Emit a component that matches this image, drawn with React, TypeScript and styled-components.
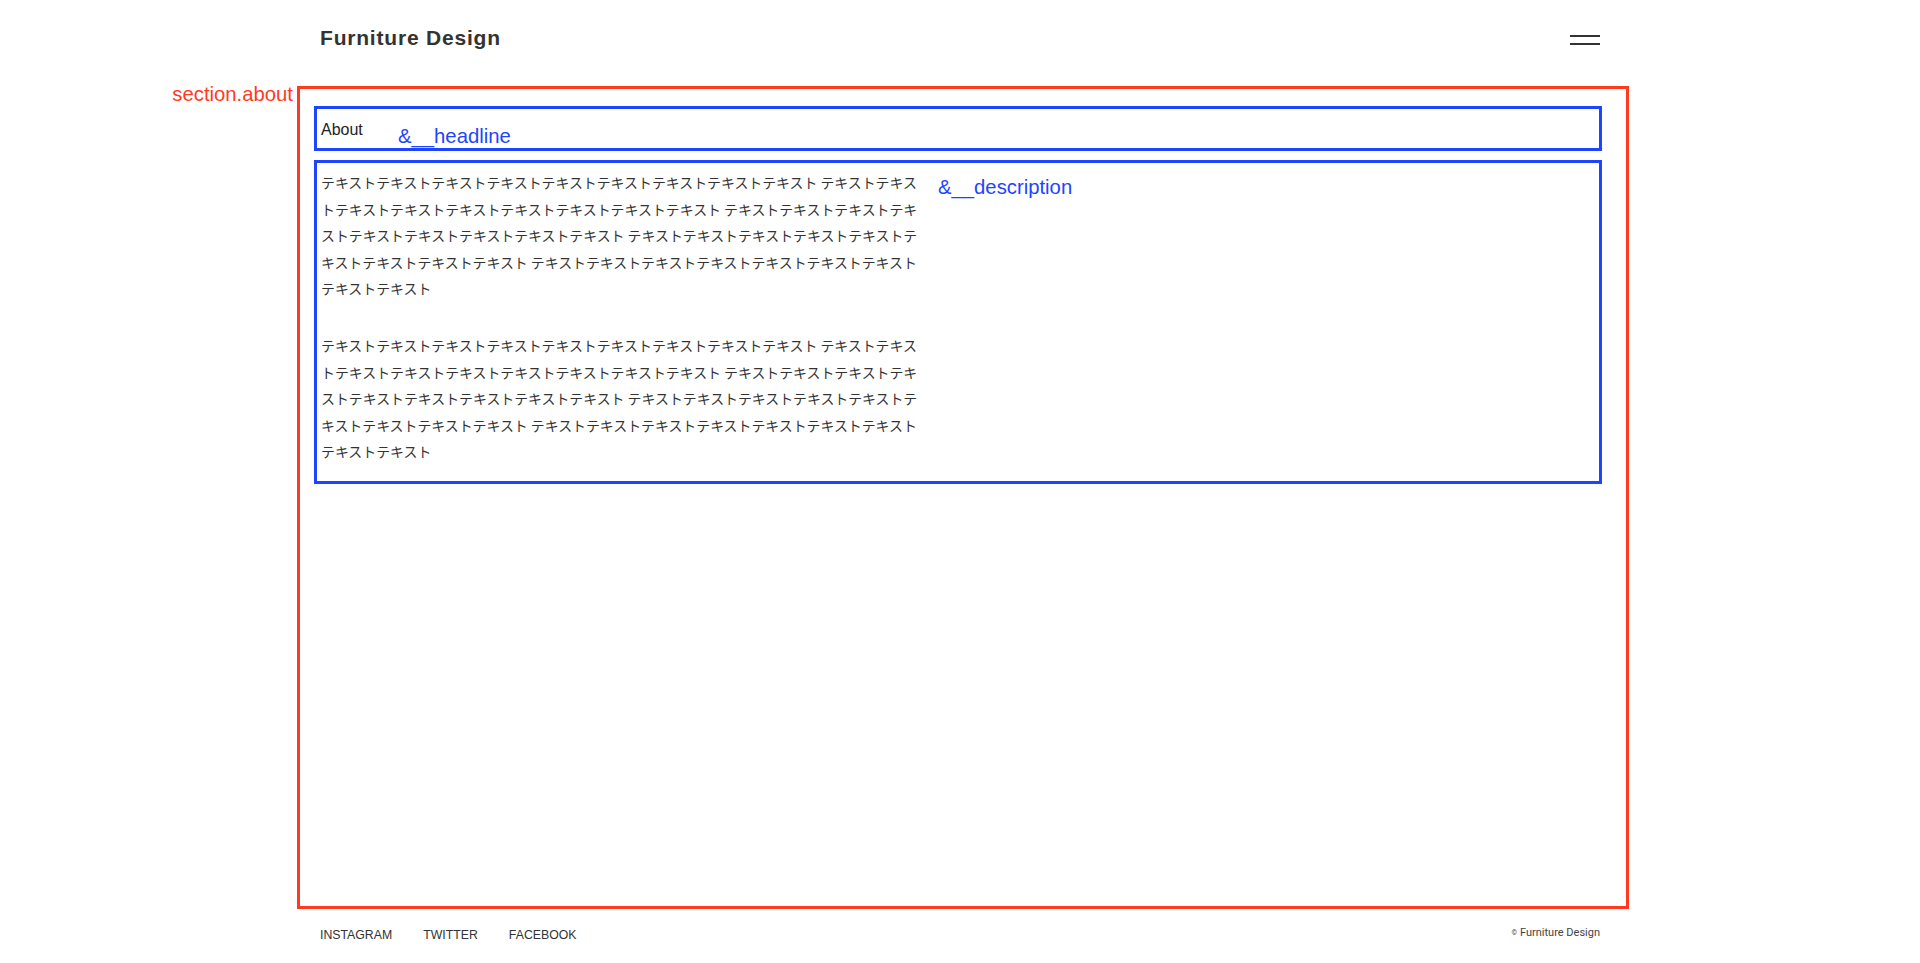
import React from "react";
import styled, { createGlobalStyle } from "styled-components";

const RED = "#ff3b1f";
const BLUE = "#1e44ff";

const GlobalStyle = createGlobalStyle`
  html, body {
    margin: 0;
    padding: 0;
    background: #ffffff;
  }
  body {
    font-family: "Liberation Sans", "Noto Sans CJK JP", sans-serif;
    color: #333333;
  }
  * {
    box-sizing: border-box;
  }
`;

const Page = styled.div`
  width: 1280px;
  margin: 0 auto;
`;

const Header = styled.header`
  display: flex;
  justify-content: space-between;
  align-items: center;
  height: 76px;
`;

const Logo = styled.h1`
  margin: 0;
  font-family: "Liberation Sans", Arial, sans-serif;
  font-weight: 700;
  font-size: 21px;
  line-height: 22px;
  letter-spacing: 0.8px;
  color: #333333;
`;

const MenuButton = styled.button`
  display: flex;
  flex-direction: column;
  gap: 6px;
  width: 30px;
  margin-top: 3px;
  padding: 0;
  border: 0;
  background: transparent;
  cursor: pointer;
`;

const MenuBar = styled.span`
  display: block;
  height: 2px;
  width: 100%;
  background: #333333;
`;

const AboutSection = styled.section`
  position: relative;
  display: flex;
  flex-direction: column;
  gap: 9px;
  height: 823px;
  margin: 10px -29px 0 -23px;
  padding: 17px 24px 0 14px;
  border: 3px solid ${RED};
`;

const SectionLabel = styled.span`
  position: absolute;
  top: -5px;
  right: calc(100% + 7px);
  white-space: nowrap;
  font-family: "Liberation Sans", Arial, sans-serif;
  font-size: 20.3px;
  line-height: 20px;
  color: ${RED};
`;

const Tag = styled.span<{ $left: number; $top: number }>`
  position: absolute;
  left: ${(p) => p.$left}px;
  top: ${(p) => p.$top}px;
  white-space: nowrap;
  font-family: "Liberation Sans", Arial, sans-serif;
  font-size: 20.3px;
  line-height: 20px;
  color: ${BLUE};
`;

const Headline = styled.div`
  position: relative;
  height: 45px;
  padding: 2px 4px 0;
  border: 3px solid ${BLUE};
`;

const HeadlineText = styled.h2`
  margin: 0;
  font-family: "Liberation Sans", Arial, sans-serif;
  font-weight: 400;
  font-size: 16px;
  line-height: 37px;
  color: #222222;
`;

const Description = styled.div`
  position: relative;
  padding: 6px 4px 16px;
  border: 3px solid ${BLUE};
`;

const Paragraph = styled.p`
  margin: 0;
  max-width: 600px;
  font-family: "Noto Sans CJK JP", "Liberation Sans", sans-serif;
  font-size: 13.9px;
  line-height: 26.6px;
  color: #333333;

  & + & {
    margin-top: 30px;
  }
`;

const Footer = styled.footer`
  display: flex;
  justify-content: space-between;
  align-items: center;
  height: 50px;
`;

const SocialList = styled.ul`
  display: flex;
  gap: 31px;
  margin: 0;
  padding: 0;
  list-style: none;
`;

const SocialLink = styled.a`
  font-family: "Liberation Sans", Arial, sans-serif;
  font-size: 12.3px;
  color: #333333;
  text-decoration: none;
`;

const Copyright = styled.small`
  margin-bottom: 4px;
  font-family: Roboto, "Liberation Sans", sans-serif;
  font-size: 11px;
  color: #444444;
`;

const CopyMark = styled.span`
  font-size: 7px;
  vertical-align: 1px;
  margin-right: 3px;
`;

const segment = "テキスト".repeat(9);
const paragraphText = Array.from({ length: 5 }, () => segment).join(" ");

const socials = ["INSTAGRAM", "TWITTER", "FACEBOOK"];

export default function App() {
  return (
    <>
      <GlobalStyle />
      <Page>
        <Header>
          <Logo>Furniture Design</Logo>
          <MenuButton aria-label="menu">
            <MenuBar />
            <MenuBar />
          </MenuButton>
        </Header>

        <AboutSection>
          <SectionLabel>section.about</SectionLabel>
          <Headline>
            <HeadlineText>About</HeadlineText>
            <Tag $left={81} $top={17}>&amp;__headline</Tag>
          </Headline>
          <Description>
            <Paragraph>{paragraphText}</Paragraph>
            <Paragraph>{paragraphText}</Paragraph>
            <Tag $left={621} $top={14}>&amp;__description</Tag>
          </Description>
        </AboutSection>

        <Footer>
          <SocialList>
            {socials.map((s) => (
              <li key={s}>
                <SocialLink href="#">{s}</SocialLink>
              </li>
            ))}
          </SocialList>
          <Copyright>
            <CopyMark>©</CopyMark>Furniture Design
          </Copyright>
        </Footer>
      </Page>
    </>
  );
}
